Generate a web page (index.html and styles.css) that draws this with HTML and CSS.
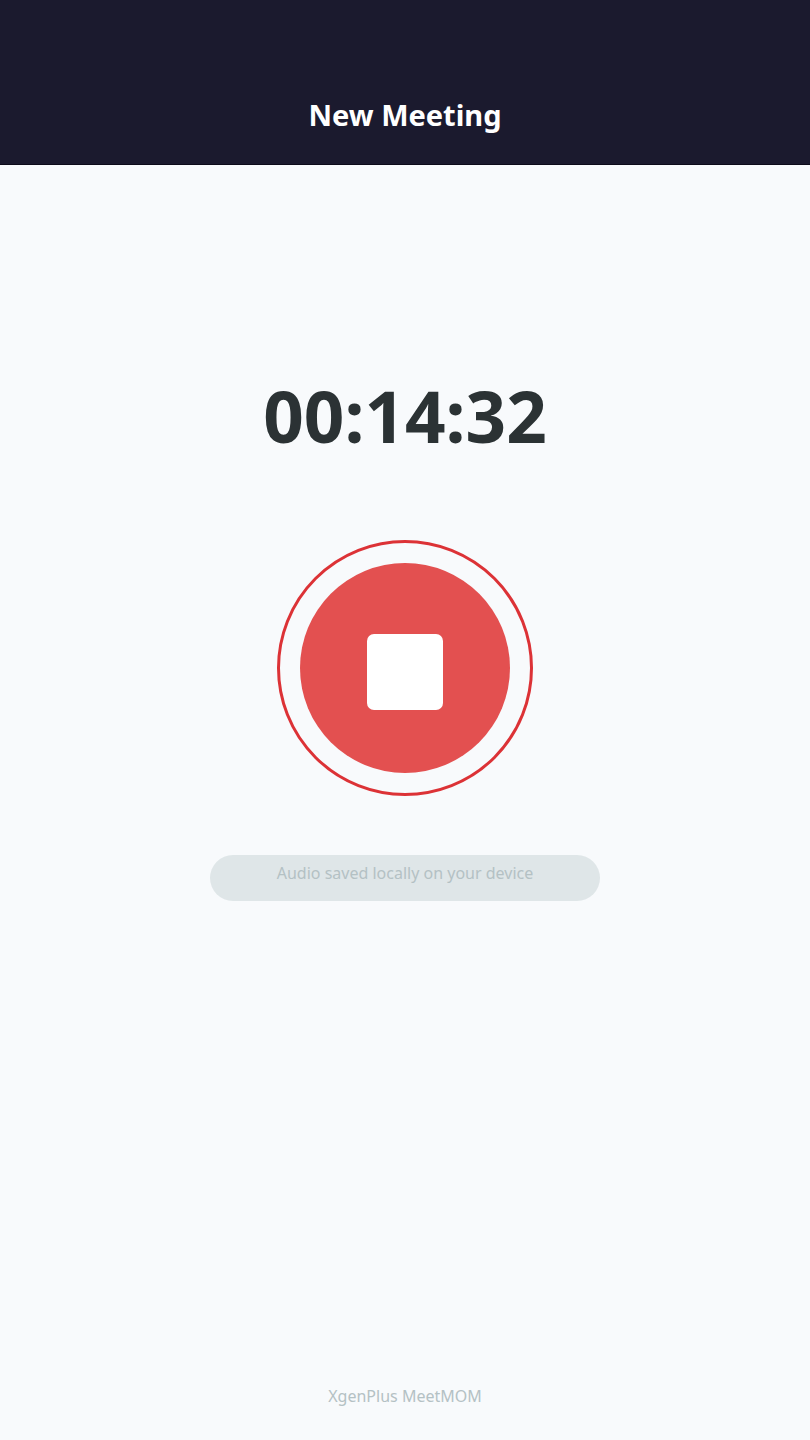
FILE: index.html
```html
<!DOCTYPE html>
<html lang="en">
<head>
  <meta charset="UTF-8">
  <meta name="viewport" content="width=device-width, initial-scale=1.0">
  <title>New Meeting</title>
  <link rel="stylesheet" href="styles.css">
</head>
<body>
  <header class="app-header">
    <h1>New Meeting</h1>
  </header>

  <main class="recorder">
    <time class="timer">00:14:32</time>

    <button type="button" class="record-button" aria-label="Stop recording">
      <span class="record-disc">
        <span class="stop-icon"></span>
      </span>
    </button>

    <p class="storage-note">Audio saved locally on your device</p>
  </main>

  <footer class="app-footer">XgenPlus MeetMOM</footer>
</body>
</html>
```

FILE: styles.css
```css
:root {
  --header-color: #1b1a2e;
  --header-border: #0d0b1a;
  --background-color: #f8fafc;
  --text-color: #2b3234;
  --muted-color: #b4c1c4;
  --note-bg: #dfe6e8;
  --ring-color: #dc3236;
  --record-color: #e35050;
}

* {
  box-sizing: border-box;
}

body {
  display: flex;
  flex-direction: column;
  min-height: 100vh;
  margin: 0;
  font-family: "Noto Sans", "Open Sans", sans-serif;
  background-color: var(--background-color);
  color: var(--text-color);
}

.app-header {
  padding: 95px 24px 29px;
  border-bottom: 1px solid var(--header-border);
  background-color: var(--header-color);
  color: #ffffff;
  text-align: center;
}

h1 {
  margin: 0;
  font-size: 29px;
  line-height: 40px;
  font-weight: 700;
}

.recorder {
  flex: 1;
  display: flex;
  flex-direction: column;
  align-items: center;
  padding-top: 207px;
}

.timer {
  font-size: 71px;
  line-height: 88px;
  font-weight: 700;
}

/* Outer ring around the stop button */
.record-button {
  display: flex;
  align-items: center;
  justify-content: center;
  width: 256px;
  height: 256px;
  margin-top: 80px;
  padding: 0;
  border: 3px solid var(--ring-color);
  border-radius: 50%;
  background: none;
  cursor: pointer;
}

.record-disc {
  display: flex;
  align-items: center;
  justify-content: center;
  width: 210px;
  height: 210px;
  padding-top: 8px;
  border-radius: 50%;
  background-color: var(--record-color);
}

.stop-icon {
  width: 76px;
  height: 76px;
  border-radius: 7px;
  background-color: #ffffff;
}

.storage-note {
  width: 390px;
  max-width: 100%;
  margin: 59px 0 0;
  padding: 6px 16px 16px;
  border-radius: 23px;
  background-color: var(--note-bg);
  color: var(--muted-color);
  font-size: 16px;
  line-height: 24px;
  text-align: center;
}

.app-footer {
  padding: 0 24px 32px;
  color: var(--muted-color);
  font-size: 16px;
  line-height: 24px;
  text-align: center;
}
```
